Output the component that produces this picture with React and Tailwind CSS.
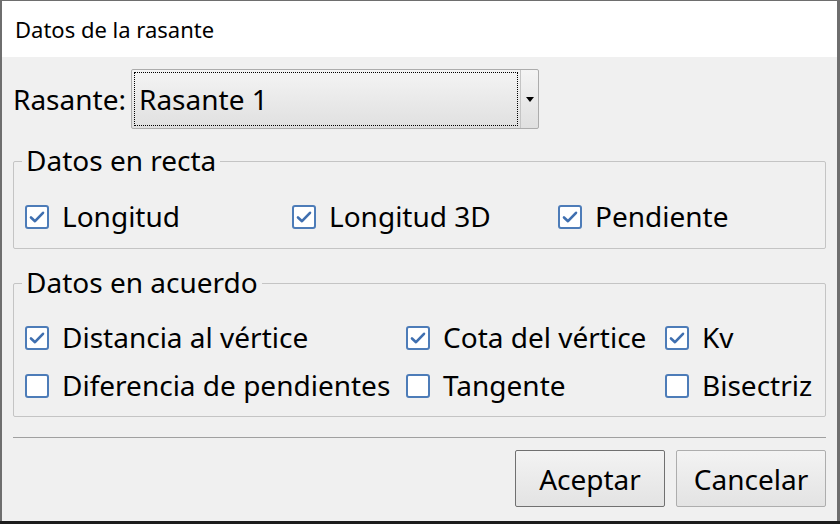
import React from "react";

const font = { fontFamily: '"Noto Sans", "Open Sans", sans-serif' };

function Check({ checked }) {
  return (
    <span className="w-[24px] h-[24px] shrink-0 rounded-[3px] border-2 border-[#4d7cb8] bg-white flex items-center justify-center">
      {checked && (
        <svg width="18" height="18" viewBox="0 0 18 18">
          <path d="M3 9.5 L7 13.2 L15 4.8" fill="none" stroke="#3f6fb0" strokeWidth="2.6" strokeLinecap="round" strokeLinejoin="round" />
        </svg>
      )}
    </span>
  );
}

function Item({ checked, label, w }) {
  return (
    <div className={`flex items-center gap-[13px] h-[28px] ${w || ""}`}>
      <Check checked={checked} />
      <span className="text-[28px] leading-none text-black whitespace-nowrap -mt-[2px]">{label}</span>
    </div>
  );
}

function Group({ title, children, h }) {
  return (
    <div className={`relative border border-[#c4c4c4] rounded-[2px] ${h}`}>
      <span className="absolute -top-[18px] left-[8px] px-[4px] bg-[#f0f0f0] text-[28px] leading-[32px] text-black">{title}</span>
      {children}
    </div>
  );
}

export default function App() {
  return (
    <div className="w-[840px] h-[524px] bg-[#1c1c1c] overflow-hidden" style={font}>
      <div className="w-[840px] h-[521px] border-l-2 border-r-[3px] border-t border-[#6e6e6e] bg-[#f0f0f0] flex flex-col">
        <div className="h-[56px] bg-white flex items-center pl-[13px] text-[22px] text-black">Datos de la rasante</div>
        <div className="flex flex-col px-[11px]">
          <div className="flex items-center mt-[12px] h-[60px]">
            <span className="text-[28px] text-black w-[118px]">Rasante:</span>
            <div className="w-[408px] h-[60px] flex border border-[#acacac] rounded-[2px] bg-gradient-to-b from-[#f4f4f4] to-[#e0e0e0]">
              <div className="flex-1 m-[2px] border border-dotted border-black flex items-center pl-[4px] text-[28px] text-black">Rasante 1</div>
              <div className="w-[18px] border-l border-[#c4c4c4] flex items-center justify-center">
                <svg width="8" height="5" viewBox="0 0 8 5"><path d="M0 0 H8 L4 5 Z" fill="#000" /></svg>
              </div>
            </div>
          </div>
          <div className="mt-[32px]">
            <Group title="Datos en recta" h="h-[88px]">
              <div className="flex items-center pl-[11px] pt-[41px]">
                <Item checked label="Longitud" w="w-[267px]" />
                <Item checked label="Longitud 3D" w="w-[266px]" />
                <Item checked label="Pendiente" />
              </div>
            </Group>
          </div>
          <div className="mt-[34px]">
            <Group title="Datos en acuerdo" h="h-[134px]">
              <div className="grid grid-cols-[381px_259px_auto] pl-[11px] pt-[40px] gap-y-[20px]">
                <Item checked label="Distancia al vértice" />
                <Item checked label="Cota del vértice" />
                <Item checked label="Kv" />
                <Item label="Diferencia de pendientes" />
                <Item label="Tangente" />
                <Item label="Bisectriz" />
              </div>
            </Group>
          </div>
          <div className="mt-[20px] h-px bg-[#a0a0a0]" />
          <div className="flex justify-end gap-[11px] mt-[12px]">
            <button className="w-[150px] h-[57px] border border-[#707070] rounded-[2px] bg-gradient-to-b from-[#f3f3f3] to-[#e3e3e3] text-[28px] text-black">Aceptar</button>
            <button className="w-[150px] h-[57px] border border-[#adadad] rounded-[2px] bg-gradient-to-b from-[#f3f3f3] to-[#e3e3e3] text-[28px] text-black">Cancelar</button>
          </div>
        </div>
      </div>
    </div>
  );
}
